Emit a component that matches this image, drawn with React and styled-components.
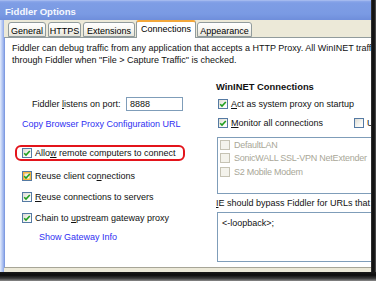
import React from "react";
import styled, { createGlobalStyle, css } from "styled-components";

const Global = createGlobalStyle`
  html, body { margin: 0; padding: 0; background: #ffffff; }
  body { font-family: "Liberation Sans", Arial, sans-serif; -webkit-font-smoothing: antialiased; }
`;

const Frame = styled.div`
  width: 376px;
  height: 281px;
  display: grid;
  grid-template-columns: 371px 5px;
  grid-template-rows: 272px 9px;
  overflow: hidden;
  background: #ffffff;
`;

const RightShadow = styled.div`
  background: linear-gradient(to right, #3a3a3a, #0e0e0e 35%, #1a1a1a 70%, #5a5a5a);
`;

const BottomShadow = styled.div`
  grid-column: 1 / span 2;
  background: linear-gradient(to bottom, #1a1a1a, #0d0d0d 35%, #3a3a3a 70%, #8c8c8c);
`;

const Window = styled.div`
  display: flex;
  flex-direction: column;
  overflow: hidden;
  background: #ece9d8;
`;

const TitleBar = styled.div`
  flex: none;
  height: 20px;
  box-sizing: border-box;
  padding: 5px 0 0 5px;
  background: linear-gradient(#b8c9f3 0, #8ea9ea 1px, #7e9de5 3px, #7a9ae3 70%, #6f8edb 100%);
  color: #f4f7fe;
  font-weight: bold;
  font-size: 9.6px;
  line-height: 13px;
  white-space: nowrap;
`;

const Body = styled.div`
  flex: 1;
  display: flex;
  min-height: 0;
`;

const LeftFrame = styled.div`
  flex: none;
  width: 4px;
  background: linear-gradient(to right, #e4ebfb, #b9cbf3 50%, #8fa9ea);
`;

const Main = styled.div`
  flex: 1;
  min-width: 0;
  display: flex;
  flex-direction: column;
  overflow: hidden;
`;

const TabStrip = styled.div`
  flex: none;
  height: 17px;
  display: flex;
  align-items: flex-end;
  gap: 2px;
  padding-left: 4px;
  position: relative;
  z-index: 1;
`;

const Tab = styled.div`
  box-sizing: border-box;
  flex: none;
  width: ${(p) => p.$w}px;
  height: 15px;
  padding-top: 2px;
  border: 1px solid #919b9c;
  border-radius: 3px 3px 0 0;
  background: linear-gradient(#ffffff, #f6f5f0 55%, #e6e4da);
  font-size: 9px;
  line-height: 12px;
  color: #000;
  text-align: center;
  white-space: nowrap;
  ${(p) =>
    p.$active &&
    css`
      height: 18px;
      margin: 0 -1px -1px;
      padding-top: 1px;
      border-top: 2px solid #f3a73a;
      border-bottom: none;
      background: #ffffff;
    `}
`;

const Panel = styled.div`
  flex: none;
  width: 620px;
  height: 231px;
  box-sizing: border-box;
  border-top: 1px solid #919b9c;
  border-left: 1px solid #809be0;
  border-bottom: 1px solid #a7a597;
  background: #ffffff;
  font-size: 9px;
  color: #111;
`;

const Description = styled.p`
  margin: 0;
  padding: 4px 0 0 7px;
  line-height: 12px;
  white-space: nowrap;
`;

const Columns = styled.div`
  display: grid;
  grid-template-columns: 211px 260px;
  margin-top: 15px;
`;

const Column = styled.div`
  display: flex;
  flex-direction: column;
  align-items: flex-start;
`;

const PortRow = styled.div`
  display: flex;
  align-items: center;
  margin-top: 16px;
  padding-left: 27px;
`;

const PortLabel = styled.span`
  width: 94px;
  line-height: 12px;
  white-space: nowrap;
`;

const TextBox = styled.div`
  box-sizing: border-box;
  width: 57px;
  height: 14px;
  border: 1px solid #7f9db9;
  padding-left: 3px;
  line-height: 12px;
`;

const Link = styled.span`
  display: block;
  margin-top: ${(p) => p.$top}px;
  padding-left: ${(p) => p.$left}px;
  line-height: 12px;
  color: #2f2ff2;
  white-space: nowrap;
`;

const Highlight = styled.div`
  box-sizing: border-box;
  width: 170px;
  height: 16px;
  margin: 15px 0 0 10px;
  padding-left: 5px;
  border: 2px solid #e3141b;
  border-radius: 6px;
  display: flex;
  align-items: center;
`;

const CheckRow = styled.div`
  display: flex;
  align-items: center;
  gap: 3px;
  height: 13px;
  margin-top: ${(p) => p.$top}px;
  margin-left: ${(p) => p.$left}px;
  white-space: nowrap;
  line-height: 12px;
`;

const MonitorRow = styled.div`
  display: grid;
  grid-template-columns: 136px auto;
  align-items: center;
  height: 13px;
  margin: 6px 0 0 2px;
`;

const Box = styled.span`
  box-sizing: border-box;
  flex: none;
  width: 10px;
  height: 10px;
  border: 1px solid #557aa3;
  background: linear-gradient(135deg, #dcdbd3, #f6f6f2 60%, #ffffff);
  display: inline-flex;
  align-items: center;
  justify-content: center;
  ${(p) =>
    p.$hover &&
    css`
      box-shadow: inset 0 0 0 1.5px #f7b640;
    `}
  ${(p) =>
    p.$disabled &&
    css`
      border-color: #c6c3b4;
      background: #f4f3ec;
    `}
`;

const Heading = styled.div`
  font-weight: bold;
  font-size: 9.4px;
  line-height: 12px;
  white-space: nowrap;
`;

const ListBox = styled.div`
  box-sizing: border-box;
  width: 240px;
  height: 57px;
  margin: 7.5px 0 0 1px;
  border: 1px solid #7f9db9;
  padding-left: 2px;
`;

const ListItem = styled.div`
  display: flex;
  align-items: center;
  gap: 4px;
  height: 13.5px;
  color: #a9a798;
  white-space: nowrap;
  line-height: 12px;
  letter-spacing: -0.25px;
`;

const FieldLabel = styled.div`
  margin-top: 3px;
  line-height: 12px;
  white-space: nowrap;
`;

const TextArea = styled.div`
  box-sizing: border-box;
  width: 240px;
  height: 50px;
  margin: 3px 0 0 1px;
  border: 1px solid #7f9db9;
  padding: 4px;
  line-height: 12px;
`;

const Check = () => (
  <svg width="8" height="8" viewBox="0 0 8 8" aria-hidden="true">
    <path d="M1.2 4.2 L3 6 L6.8 2" fill="none" stroke="#1f9e1f" strokeWidth="1.6" />
  </svg>
);

const CheckBox = ({ checked, hover, disabled }) => (
  <Box $hover={hover} $disabled={disabled}>
    {checked && <Check />}
  </Box>
);

const tabs = [
  { label: "General", w: 38 },
  { label: "HTTPS", w: 33 },
  { label: "Extensions", w: 52 },
  { label: "Connections", w: 60, active: true },
  { label: "Appearance", w: 55 },
];

export default function App() {
  return (
    <>
      <Global />
      <Frame>
        <Window>
          <TitleBar>Fiddler Options</TitleBar>
          <Body>
            <LeftFrame />
            <Main>
              <TabStrip>
                {tabs.map((t) => (
                  <Tab key={t.label} $w={t.w} $active={t.active}>
                    {t.label}
                  </Tab>
                ))}
              </TabStrip>
              <Panel>
                <Description>
                  Fiddler can debug traffic from any application that accepts a HTTP Proxy. All WinINET traffic is routed
                  <br />
                  through Fiddler when "File &gt; Capture Traffic" is checked.
                </Description>
                <Columns>
                  <Column>
                    <PortRow>
                      <PortLabel>
                        Fiddler <u>l</u>istens on port:
                      </PortLabel>
                      <TextBox>8888</TextBox>
                    </PortRow>
                    <Link $top={7} $left={17}>
                      Copy Browser Proxy Configuration URL
                    </Link>
                    <Highlight>
                      <CheckRow $top={0} $left={0}>
                        <CheckBox checked />
                        <span>
                          Allo<u>w</u> remote computers to connect
                        </span>
                      </CheckRow>
                    </Highlight>
                    <CheckRow $top={8.5} $left={17}>
                      <CheckBox checked hover />
                      <span>
                        Reuse client co<u>n</u>nections
                      </span>
                    </CheckRow>
                    <CheckRow $top={8} $left={17}>
                      <CheckBox checked />
                      <span>
                        <u>R</u>euse connections to servers
                      </span>
                    </CheckRow>
                    <CheckRow $top={8} $left={17}>
                      <CheckBox checked />
                      <span>
                        Chain to <u>u</u>pstream gateway proxy
                      </span>
                    </CheckRow>
                    <Link $top={6.5} $left={34}>
                      Show Gateway Info
                    </Link>
                  </Column>
                  <Column>
                    <Heading>WinINET Connections</Heading>
                    <CheckRow $top={4.5} $left={2}>
                      <CheckBox checked />
                      <span>
                        <u>A</u>ct as system proxy on startup
                      </span>
                    </CheckRow>
                    <MonitorRow>
                      <CheckRow $top={0} $left={0}>
                        <CheckBox checked />
                        <span>
                          <u>M</u>onitor all connections
                        </span>
                      </CheckRow>
                      <CheckRow $top={0} $left={0}>
                        <CheckBox />
                        <span>Use PAC Script</span>
                      </CheckRow>
                    </MonitorRow>
                    <ListBox>
                      <ListItem>
                        <CheckBox disabled />
                        <span>DefaultLAN</span>
                      </ListItem>
                      <ListItem>
                        <CheckBox disabled />
                        <span>SonicWALL SSL-VPN NetExtender</span>
                      </ListItem>
                      <ListItem>
                        <CheckBox disabled />
                        <span>S2 Mobile Modem</span>
                      </ListItem>
                    </ListBox>
                    <FieldLabel>
                      <u>I</u>E should bypass Fiddler for URLs that start with:
                    </FieldLabel>
                    <TextArea>&lt;-loopback&gt;;</TextArea>
                  </Column>
                </Columns>
              </Panel>
            </Main>
          </Body>
        </Window>
        <RightShadow />
        <BottomShadow />
      </Frame>
    </>
  );
}
